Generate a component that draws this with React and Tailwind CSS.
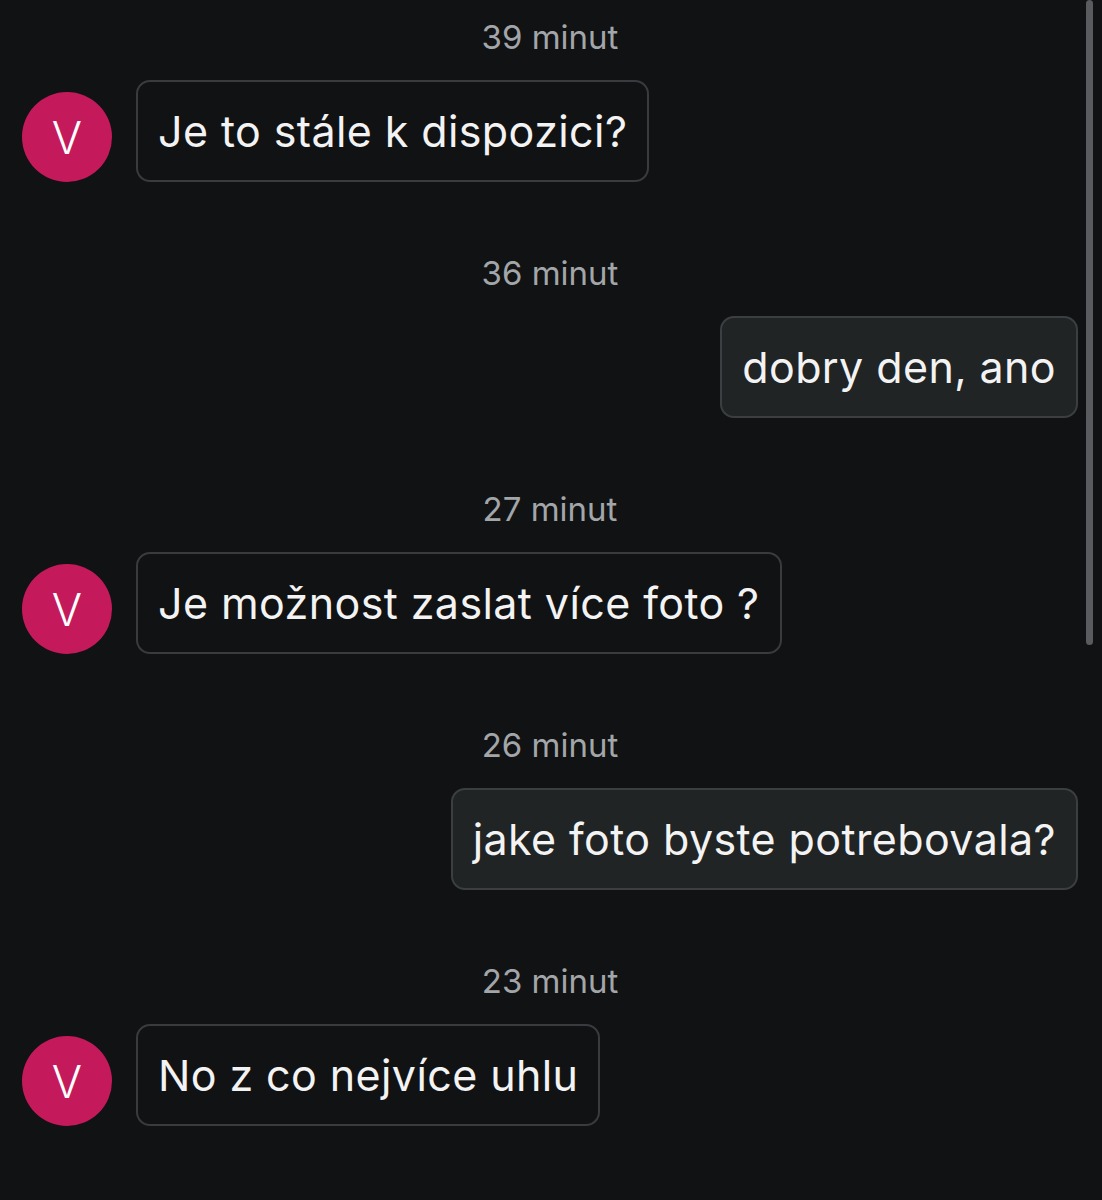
import React from 'react';

const messages = [
  { time: '39 minut', text: 'Je to stále k dispozici?', mine: false },
  { time: '36 minut', text: 'dobry den, ano', mine: true },
  { time: '27 minut', text: 'Je možnost zaslat více foto ?', mine: false },
  { time: '26 minut', text: 'jake foto byste potrebovala?', mine: true },
  { time: '23 minut', text: 'No z co nejvíce uhlu', mine: false },
];

function Avatar() {
  return (
    <div className="w-[90px] h-[90px] rounded-full bg-[#c41a5c] flex items-center justify-center shrink-0 text-[45px] font-light leading-none text-white">
      V
    </div>
  );
}

export default function App() {
  return (
    <div
      className="relative w-[1102px] h-[1200px] bg-[#111214] overflow-hidden pt-[19px] pl-[22px] pr-[24px]"
      style={{ fontFamily: 'Inter, "Noto Sans", sans-serif' }}
    >
      {/* scrollbar */}
      <div className="absolute right-[9px] top-0 w-[7px] h-[645px] rounded-full bg-[#5a5b5e]" />

      <div className="flex flex-col">
        {messages.map((m, i) => (
          <div key={i} className="flex flex-col mb-[73px]">
            <div className="text-center text-[33px] leading-[36px] text-[#a3a6a9] mb-[25px]">{m.time}</div>
            {m.mine ? (
              <div className="flex justify-end">
                <div className="bg-[#202425] border-2 border-[#3c3f41] rounded-[14px] px-[20px] py-[25px] text-[43px] leading-[48px] tracking-[0.4px] text-[#f3f3f3]">
                  {m.text}
                </div>
              </div>
            ) : (
              <div className="flex items-end gap-[24px]">
                <Avatar />
                <div className="border-2 border-[#393b3e] rounded-[14px] px-[20px] py-[25px] text-[43px] leading-[48px] tracking-[0.4px] text-[#f3f3f3]">
                  {m.text}
                </div>
              </div>
            )}
          </div>
        ))}
      </div>
    </div>
  );
}
